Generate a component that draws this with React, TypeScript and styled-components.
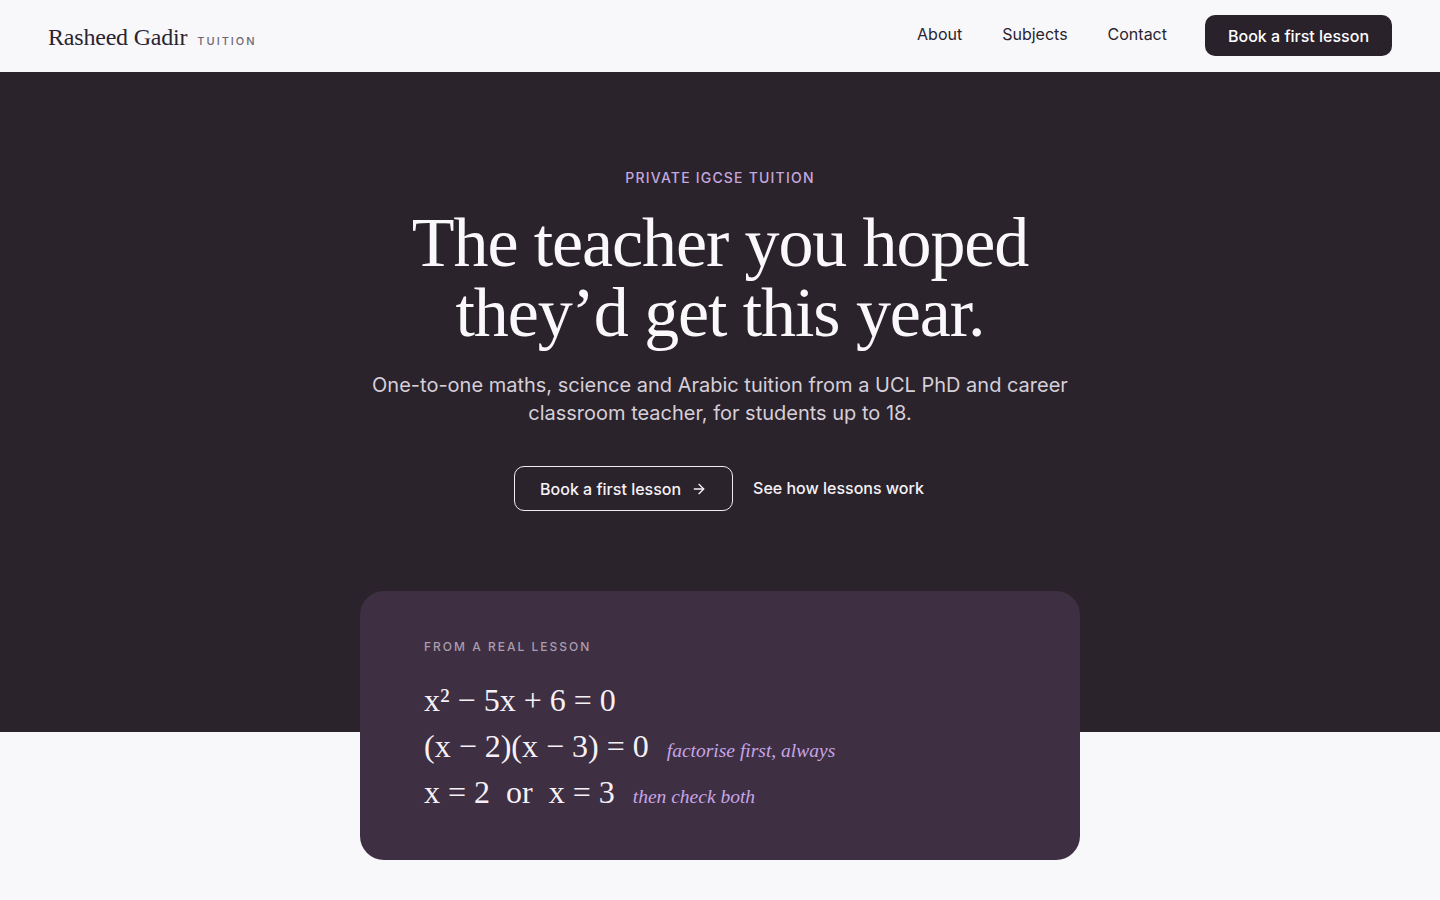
import React from 'react';
import styled, { createGlobalStyle } from 'styled-components';
import { ArrowRight } from 'lucide-react';

const GlobalStyle = createGlobalStyle`
    * { box-sizing: border-box; }
    body {
        margin: 0;
        background: #f8f8fb;
        font-family: Inter, "Noto Sans", sans-serif;
        color: #2a2430;
    }
`;

const Page = styled.div`
    min-height: 100vh;
    background: #f8f8fb;
`;

const Nav = styled.header`
    height: 72px;
    padding: 0 48px;
    display: flex;
    align-items: center;
    justify-content: space-between;
    background: #f8f8fb;
`;

const Brand = styled.div`
    display: flex;
    align-items: baseline;
    gap: 10px;
    padding-top: 2px;
`;

const BrandName = styled.span`
    font-family: "Liberation Serif", serif;
    font-size: 24px;
    color: #2a2430;
    letter-spacing: -0.2px;
`;

const BrandTag = styled.span`
    font-size: 11px;
    letter-spacing: 2px;
    color: #6d6772;
    font-weight: 500;
`;

const NavLinks = styled.nav`
    display: flex;
    align-items: center;
    gap: 40px;
    margin-top: -1px;
`;

const NavLink = styled.a`
    font-size: 16px;
    color: #2a2430;
    text-decoration: none;
    margin-top: -3px;
`;

const NavButton = styled.a`
    height: 41px;
    padding: 0 23px;
    margin-left: -2px;
    display: flex;
    align-items: center;
    border-radius: 10px;
    background: #29222b;
    color: #fff;
    font-size: 16px;
    font-weight: 500;
    text-decoration: none;
`;

const HeroWrap = styled.section`
    background: linear-gradient(to bottom, #2a232b 0, #2a232b 660px, transparent 660px);
    padding: 96px 0 40px;
    display: flex;
    flex-direction: column;
    align-items: center;
`;

const Eyebrow = styled.div`
    font-size: 14px;
    line-height: 20px;
    letter-spacing: 1.2px;
    font-weight: 500;
    color: #c6a7de;
`;

const Headline = styled.h1`
    margin: 20px 0 0;
    font-family: "Liberation Serif", serif;
    font-weight: 400;
    font-size: 70px;
    line-height: 70px;
    letter-spacing: -1.1px;
    color: #fbf8fc;
    text-align: center;
`;

const Lead = styled.p`
    margin: 23px 0 0;
    max-width: 720px;
    font-size: 20px;
    line-height: 28px;
    color: #d6cfd9;
    text-align: center;
`;

const Actions = styled.div`
    margin-top: 39px;
    margin-left: -2px;
    display: flex;
    align-items: center;
    gap: 20px;
`;

const OutlineButton = styled.a`
    height: 45px;
    padding: 0 25px;
    display: flex;
    align-items: center;
    gap: 10px;
    border: 1px solid #f1ecf3;
    border-radius: 10px;
    color: #f6f2f7;
    font-size: 16px;
    font-weight: 500;
    text-decoration: none;
`;

const TextLink = styled.a`
    color: #f6f2f7;
    font-size: 16px;
    font-weight: 500;
    text-decoration: none;
    margin-top: -2px;
`;

const LessonCard = styled.div`
    margin-top: 80px;
    width: 720px;
    padding: 48px 64px 45px;
    border-radius: 24px;
    background: #3e2f43;
`;

const CardLabel = styled.div`
    font-size: 12px;
    line-height: 16px;
    letter-spacing: 2px;
    font-weight: 500;
    color: #aa9dae;
`;

const MathBlock = styled.div`
    margin-top: 22px;
    display: flex;
    flex-direction: column;
`;

const MathLine = styled.div`
    display: flex;
    align-items: baseline;
    gap: 18px;
    height: 46px;
    line-height: 46px;
`;

const Expr = styled.span`
    font-family: "Liberation Serif", serif;
    font-size: 32px;
    color: #f6f1f7;
    white-space: pre;
`;

const Note = styled.span`
    font-family: "Liberation Serif", serif;
    font-style: italic;
    font-size: 19.5px;
    color: #c7a5e6;
`;

const App: React.FC = () => (
    <Page>
        <GlobalStyle />
        <Nav>
            <Brand>
                <BrandName>Rasheed Gadir</BrandName>
                <BrandTag>TUITION</BrandTag>
            </Brand>
            <NavLinks>
                <NavLink href="#about">About</NavLink>
                <NavLink href="#subjects">Subjects</NavLink>
                <NavLink href="#contact">Contact</NavLink>
                <NavButton href="#book">Book a first lesson</NavButton>
            </NavLinks>
        </Nav>
        <HeroWrap>
            <Eyebrow>PRIVATE IGCSE TUITION</Eyebrow>
            <Headline>
                The teacher you hoped
                <br />
                they’d get this year.
            </Headline>
            <Lead>
                One-to-one maths, science and Arabic tuition from a UCL PhD and career classroom teacher, for
                students up to 18.
            </Lead>
            <Actions>
                <OutlineButton href="#book">
                    Book a first lesson <ArrowRight size={16} strokeWidth={2} />
                </OutlineButton>
                <TextLink href="#how">See how lessons work</TextLink>
            </Actions>
            <LessonCard>
                <CardLabel>FROM A REAL LESSON</CardLabel>
                <MathBlock>
                    <MathLine>
                        <Expr>x² − 5x + 6 = 0</Expr>
                    </MathLine>
                    <MathLine>
                        <Expr>(x − 2)(x − 3) = 0</Expr>
                        <Note>factorise first, always</Note>
                    </MathLine>
                    <MathLine>
                        <Expr>x = 2  or  x = 3</Expr>
                        <Note>then check both</Note>
                    </MathLine>
                </MathBlock>
            </LessonCard>
        </HeroWrap>
    </Page>
);

export default App;
